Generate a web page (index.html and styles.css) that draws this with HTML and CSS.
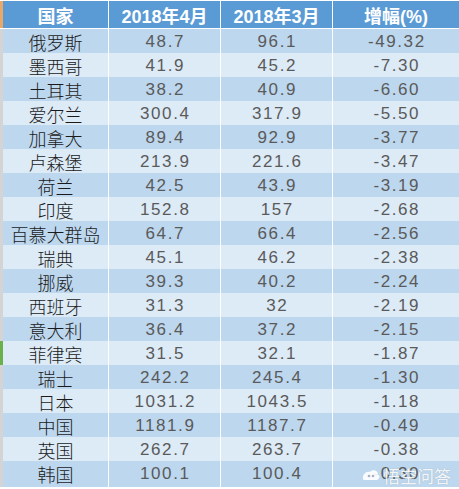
FILE: index.html
```html
<!DOCTYPE html>
<html>
<head>
<meta charset="utf-8">
<link rel="stylesheet" href="styles.css">
</head>
<body>
<div class="sheet">
  <div class="row head">
    <div class="strip"></div>
    <div class="cell c1">国家</div>
    <div class="cell c2">2018年4月</div>
    <div class="cell c3">2018年3月</div>
    <div class="cell c4">增幅(%)</div>
  </div>
  <div class="row dark"><div class="strip"></div><div class="cell c1 name">俄罗斯</div><div class="cell c2 num">48.7</div><div class="cell c3 num">96.1</div><div class="cell c4 num">-49.32</div></div>
  <div class="row light"><div class="strip"></div><div class="cell c1 name">墨西哥</div><div class="cell c2 num">41.9</div><div class="cell c3 num">45.2</div><div class="cell c4 num">-7.30</div></div>
  <div class="row dark"><div class="strip"></div><div class="cell c1 name">土耳其</div><div class="cell c2 num">38.2</div><div class="cell c3 num">40.9</div><div class="cell c4 num">-6.60</div></div>
  <div class="row light"><div class="strip"></div><div class="cell c1 name">爱尔兰</div><div class="cell c2 num">300.4</div><div class="cell c3 num">317.9</div><div class="cell c4 num">-5.50</div></div>
  <div class="row dark"><div class="strip"></div><div class="cell c1 name">加拿大</div><div class="cell c2 num">89.4</div><div class="cell c3 num">92.9</div><div class="cell c4 num">-3.77</div></div>
  <div class="row light"><div class="strip"></div><div class="cell c1 name">卢森堡</div><div class="cell c2 num">213.9</div><div class="cell c3 num">221.6</div><div class="cell c4 num">-3.47</div></div>
  <div class="row dark"><div class="strip"></div><div class="cell c1 name">荷兰</div><div class="cell c2 num">42.5</div><div class="cell c3 num">43.9</div><div class="cell c4 num">-3.19</div></div>
  <div class="row light"><div class="strip"></div><div class="cell c1 name">印度</div><div class="cell c2 num">152.8</div><div class="cell c3 num">157</div><div class="cell c4 num">-2.68</div></div>
  <div class="row dark"><div class="strip"></div><div class="cell c1 name">百慕大群岛</div><div class="cell c2 num">64.7</div><div class="cell c3 num">66.4</div><div class="cell c4 num">-2.56</div></div>
  <div class="row light"><div class="strip"></div><div class="cell c1 name">瑞典</div><div class="cell c2 num">45.1</div><div class="cell c3 num">46.2</div><div class="cell c4 num">-2.38</div></div>
  <div class="row dark"><div class="strip"></div><div class="cell c1 name">挪威</div><div class="cell c2 num">39.3</div><div class="cell c3 num">40.2</div><div class="cell c4 num">-2.24</div></div>
  <div class="row light"><div class="strip"></div><div class="cell c1 name">西班牙</div><div class="cell c2 num">31.3</div><div class="cell c3 num">32</div><div class="cell c4 num">-2.19</div></div>
  <div class="row dark"><div class="strip"></div><div class="cell c1 name">意大利</div><div class="cell c2 num">36.4</div><div class="cell c3 num">37.2</div><div class="cell c4 num">-2.15</div></div>
  <div class="row light"><div class="strip green"></div><div class="cell c1 name">菲律宾</div><div class="cell c2 num">31.5</div><div class="cell c3 num">32.1</div><div class="cell c4 num">-1.87</div></div>
  <div class="row dark"><div class="strip"></div><div class="cell c1 name">瑞士</div><div class="cell c2 num">242.2</div><div class="cell c3 num">245.4</div><div class="cell c4 num">-1.30</div></div>
  <div class="row light"><div class="strip"></div><div class="cell c1 name">日本</div><div class="cell c2 num">1031.2</div><div class="cell c3 num">1043.5</div><div class="cell c4 num">-1.18</div></div>
  <div class="row dark"><div class="strip"></div><div class="cell c1 name">中国</div><div class="cell c2 num">1181.9</div><div class="cell c3 num">1187.7</div><div class="cell c4 num">-0.49</div></div>
  <div class="row light"><div class="strip"></div><div class="cell c1 name">英国</div><div class="cell c2 num">262.7</div><div class="cell c3 num">263.7</div><div class="cell c4 num">-0.38</div></div>
  <div class="row dark"><div class="strip"></div><div class="cell c1 name">韩国</div><div class="cell c2 num">100.1</div><div class="cell c3 num">100.4</div><div class="cell c4 num">-0.30</div></div>
</div>
<div class="watermark">
  <svg class="wm-logo" width="20" height="16" viewBox="0 0 20 16">
    <path d="M2 11 C1 7 5 3 9 4 C11 1 17 2 17 6 C19 7 19 11 16 12 L4 12 C3 12 2 12 2 11 Z" fill="rgba(255,255,255,0.9)"/>
    <circle cx="8" cy="8" r="1.3" fill="rgba(160,170,185,0.9)"/>
    <circle cx="12" cy="8" r="1.3" fill="rgba(160,170,185,0.9)"/>
  </svg>
  <span class="wm-text">悟空问答</span>
</div>
</body>
</html>
```
FILE: styles.css
```css
html, body {
  margin: 0;
  padding: 0;
  background: #ffffff;
}
body {
  width: 459px;
  height: 489px;
  overflow: hidden;
  position: relative;
}
.sheet {
  display: flex;
  flex-direction: column;
  gap: 1px;
  padding-top: 1px;
  width: 458px;
}
.row {
  display: grid;
  grid-template-columns: 2px 105px 111px 111px 126px;
  column-gap: 1px;
  height: 23px;
}
.row .strip {
  background: #d4d4d4;
  margin-right: -1px;
}
.row .strip.green {
  background: #6ab04c;
}
.head {
  height: 27px;
}
.head .strip {
  background: #e8a86a;
}
.cell {
  display: flex;
  align-items: center;
  justify-content: center;
  white-space: nowrap;
}
.head .cell {
  background: #5b9bd5;
  color: #ffffff;
  font-family: "Liberation Sans", "Noto Sans CJK SC", sans-serif;
  font-weight: bold;
  font-size: 18px;
}
.dark .cell {
  background: #bdd7ee;
}
.light .cell {
  background: #ddebf7;
}
.name {
  font-family: "Noto Sans CJK SC", sans-serif;
  font-weight: 300;
  font-size: 18px;
  color: #1a1a1a;
}
.num {
  font-family: "Liberation Sans", sans-serif;
  font-size: 17px;
  letter-spacing: 1.6px;
  color: #5a5a5a;
  padding-left: 1.6px;
}
.watermark {
  position: absolute;
  left: 361px;
  top: 463px;
  display: flex;
  align-items: center;
  gap: 2px;
}
.wm-text {
  font-family: "Noto Sans CJK SC", sans-serif;
  font-size: 17px;
  color: rgba(255, 255, 255, 0.9);
  text-shadow: 0 0 1px rgba(120, 130, 140, 0.5);
}
```
